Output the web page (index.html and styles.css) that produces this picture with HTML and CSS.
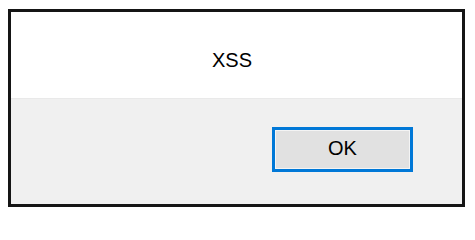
FILE: index.html
```html
<!DOCTYPE html>
<html>
<head>
<meta charset="utf-8">
<link rel="stylesheet" href="styles.css">
</head>
<body>
<div class="dialog">
  <div class="message">XSS</div>
  <div class="footer">
    <button class="ok">OK</button>
  </div>
</div>
</body>
</html>
```
FILE: styles.css
```css
html, body {
  margin: 0;
  padding: 0;
  background: #ffffff;
}
body {
  font-family: "Liberation Sans", Arial, sans-serif;
}
.dialog {
  box-sizing: border-box;
  width: 457px;
  height: 198px;
  margin: 9px 0 0 8px;
  border: 3px solid #151515;
  display: flex;
  flex-direction: column;
  background: #ffffff;
}
.message {
  height: 86px;
  box-sizing: border-box;
  padding: 37px 9px 0 0;
  text-align: center;
  font-size: 20px;
  line-height: 23px;
  color: #000000;
}
.footer {
  flex: 1;
  background: #f0f0f0;
  border-top: 1px solid #e9e9e9;
  display: flex;
  justify-content: flex-end;
  align-items: flex-start;
  padding: 28px 49px 0 0;
}
.ok {
  box-sizing: border-box;
  width: 141px;
  height: 45px;
  background: #e1e1e1;
  border: 3px solid #0078d7;
  box-shadow: inset 0 0 0 1px #f4f4f4;
  font-family: "Liberation Sans", Arial, sans-serif;
  font-size: 20px;
  color: #000000;
  padding: 0 0 3px 0;
  margin: 0;
}
```
